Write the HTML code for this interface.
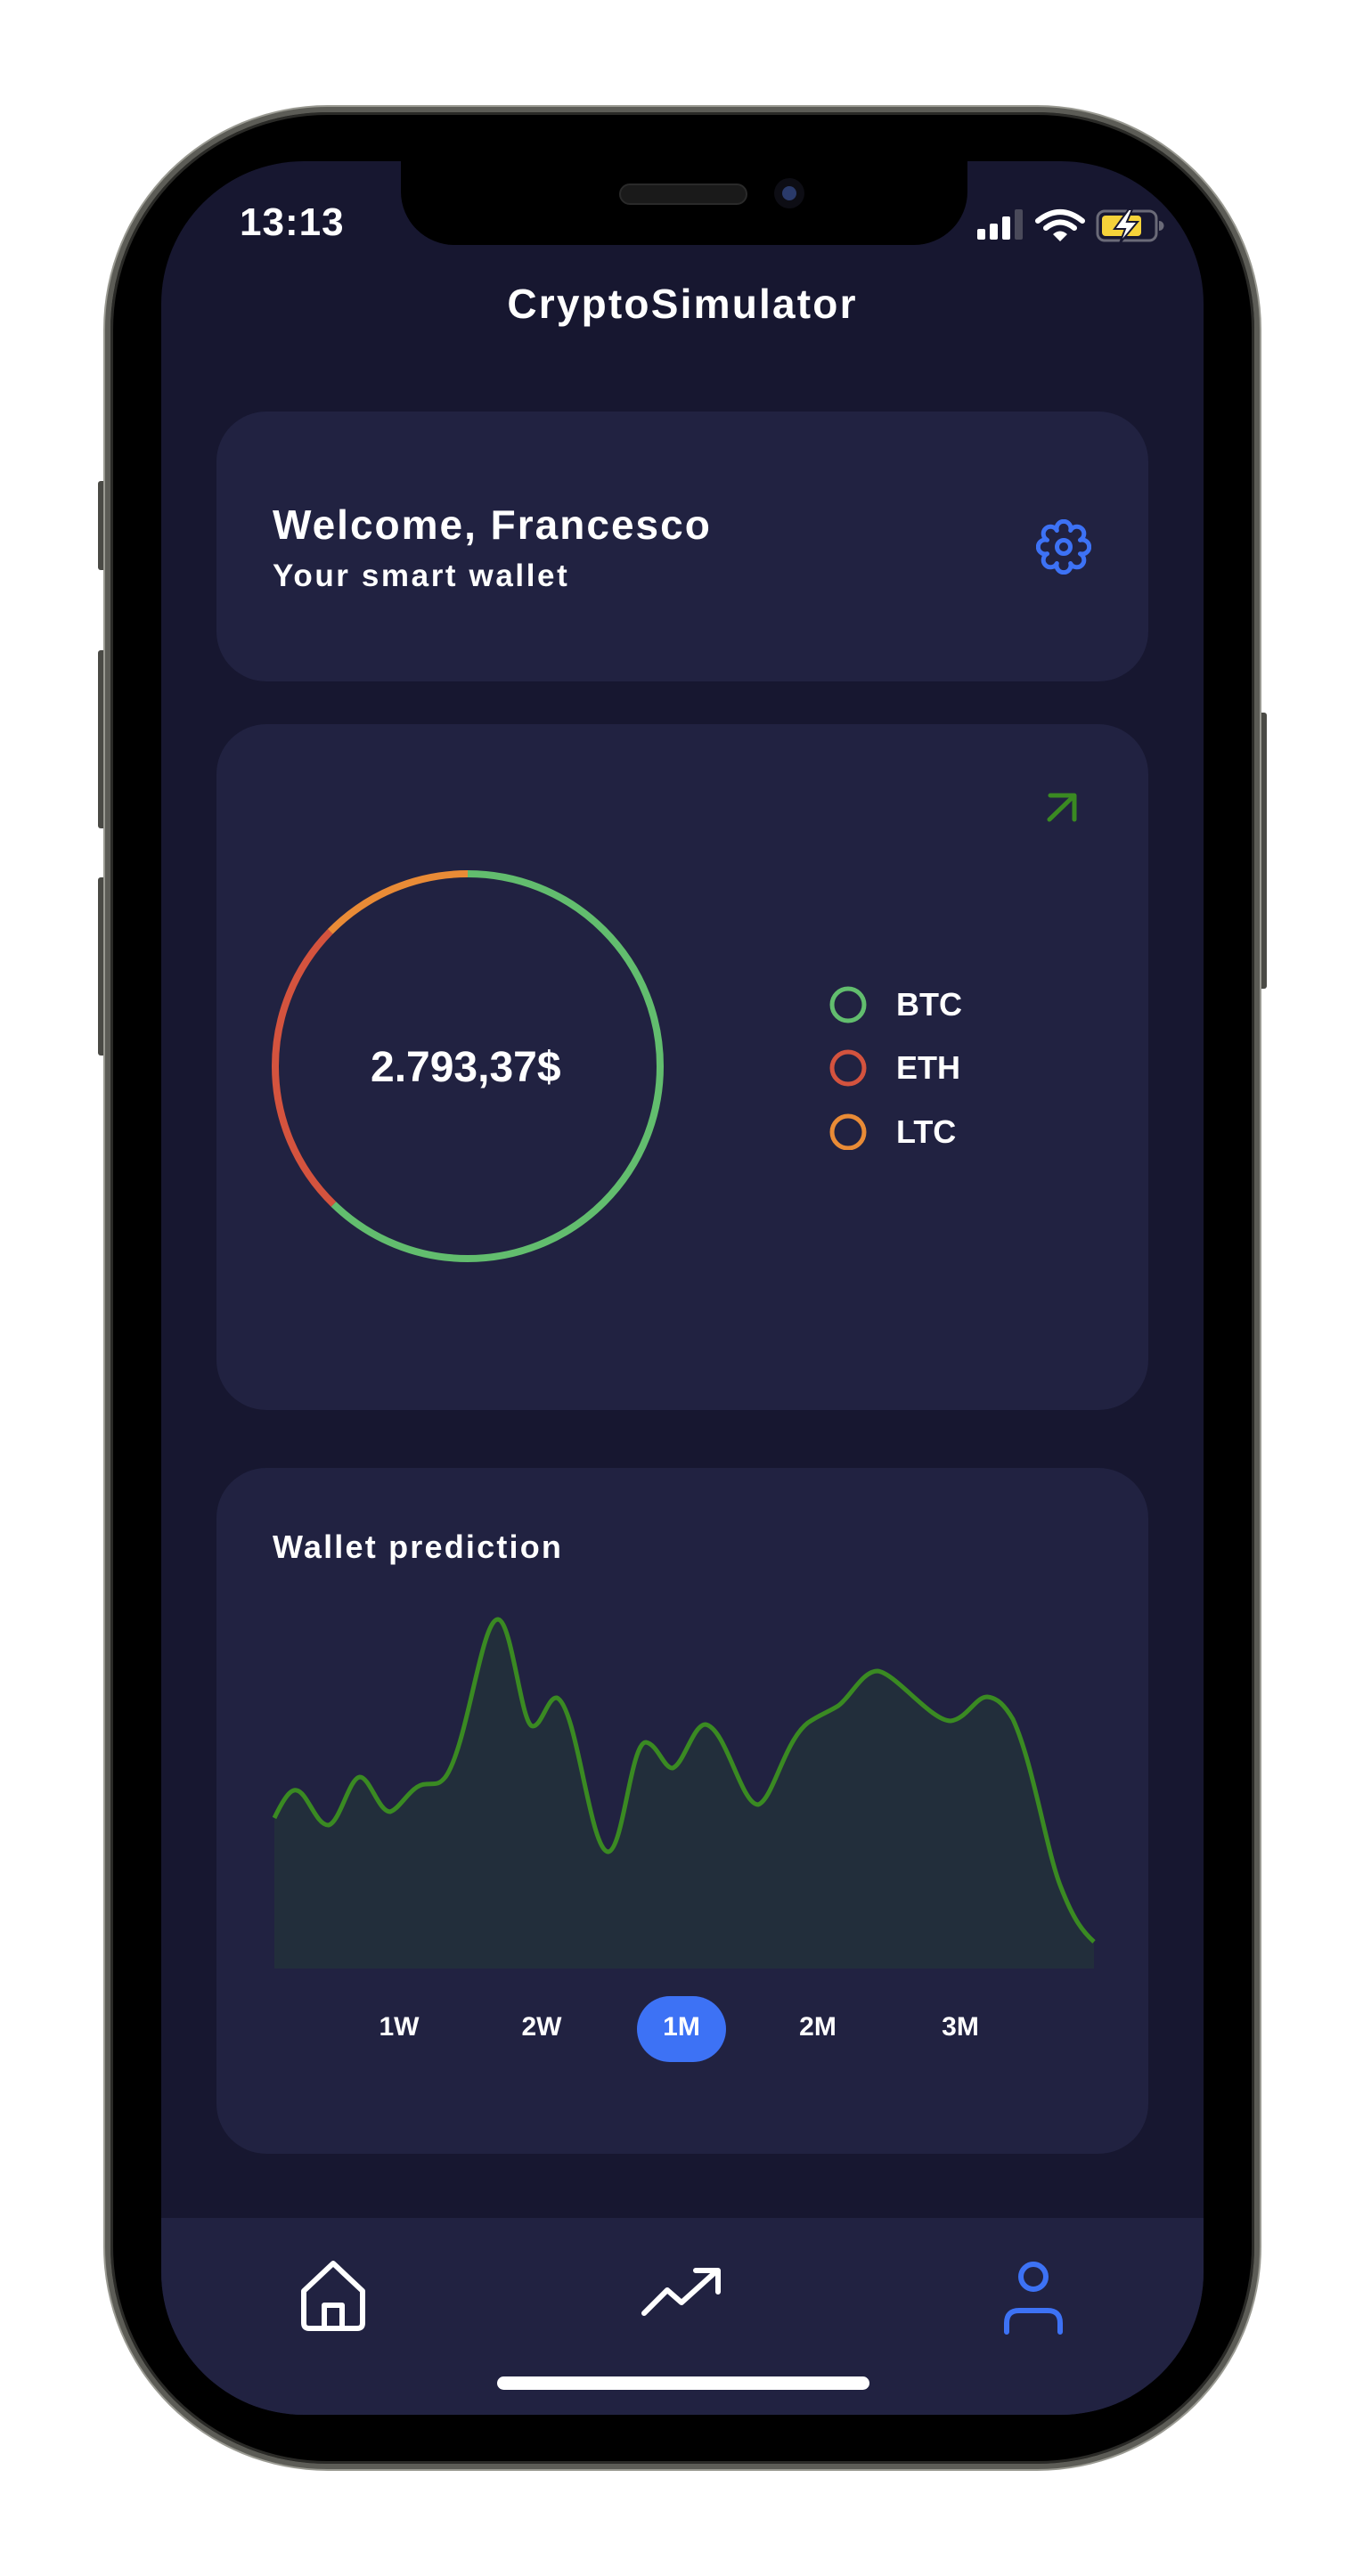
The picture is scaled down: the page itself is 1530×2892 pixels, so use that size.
<!DOCTYPE html>
<html><head><meta charset="utf-8"><style>
*{margin:0;padding:0;box-sizing:border-box}
html,body{width:1530px;height:2892px;background:#fff;overflow:hidden;font-family:"Liberation Sans",sans-serif}
.abs{position:absolute}
.frame{left:118px;top:120px;width:1296px;height:2652px;border-radius:250px;background:#000;border:6px solid #5c5c56;box-shadow:inset 0 0 0 3px #2a2a27,0 0 0 2px #9a9a92}
.screen{left:181px;top:181px;width:1170px;height:2530px;border-radius:160px;background:#171730;overflow:hidden}
.card{background:#212241;border-radius:56px;position:absolute;left:62px;width:1046px}
.t{color:#fff;font-weight:bold;position:absolute;white-space:nowrap}
.btn{position:absolute;top:2078px;color:#fff;font-weight:bold;font-size:30px;transform:translateX(-50%)}
</style></head><body>
<div class="abs" style="left:110px;top:540px;width:12px;height:100px;background:#4a4a45;border-radius:3px"></div>
<div class="abs" style="left:110px;top:730px;width:12px;height:200px;background:#4a4a45;border-radius:3px"></div>
<div class="abs" style="left:110px;top:985px;width:12px;height:200px;background:#4a4a45;border-radius:3px"></div>
<div class="abs" style="left:1410px;top:800px;width:12px;height:310px;background:#4a4a45;border-radius:3px"></div>
<div class="abs frame"></div>
<div class="abs screen">
  <div class="abs" style="left:269px;top:-10px;width:636px;height:104px;background:#000;border-radius:0 0 60px 60px"></div>
  <div class="abs" style="left:514px;top:25px;width:144px;height:24px;background:#1a1a1a;border-radius:12px;border:2px solid #2a2a2a"></div>
  <div class="abs" style="left:688px;top:19px;width:34px;height:34px;background:#0d0d14;border-radius:50%"><div style="margin:9px;width:16px;height:16px;border-radius:50%;background:#2a3a6a"></div></div>
  <div class="t" style="left:88px;top:44px;font-size:44px;letter-spacing:1px">13:13</div>
  <svg class="abs" style="left:910px;top:50px" width="220" height="45" viewBox="0 0 220 45">
    <rect x="6" y="26" width="9" height="12" rx="2" fill="#fff"/><rect x="20" y="20" width="9" height="18" rx="2" fill="#fff"/><rect x="34" y="12" width="9" height="26" rx="2" fill="#fff"/><rect x="48" y="4" width="9" height="34" rx="2" fill="#4a4a5a"/>
    <path d="M74 17 Q99 -3 124 17" stroke="#fff" stroke-width="6" fill="none" stroke-linecap="round"/><path d="M83 25 Q99 12 115 25" stroke="#fff" stroke-width="6" fill="none" stroke-linecap="round"/><path d="M91 32 L99 40 L107 32 Q99 25 91 32Z" fill="#fff"/>
    <rect x="141" y="6" width="66" height="33" rx="8" fill="none" stroke="#6a6a78" stroke-width="3"/><rect x="146" y="11" width="44" height="23" rx="4" fill="#f5d23a"/><path d="M210 17 v11 a4 4 0 0 0 0 -11z" fill="#6a6a78"/>
    <path d="M176 4 L160 26 L172 26 L166 42 L186 18 L174 18 L180 4Z" fill="#fff" stroke="#171730" stroke-width="2"/>
  </svg>
  <div class="t" style="left:0;width:1170px;text-align:center;top:133px;font-size:46px;letter-spacing:2.2px">CryptoSimulator</div>
  <div class="card" style="top:281px;height:303px"></div>
  <div class="t" style="left:125px;top:381px;font-size:46px;letter-spacing:2px">Welcome, Francesco</div>
  <div class="t" style="left:125px;top:446px;font-size:35px;letter-spacing:2.6px">Your smart wallet</div>
  <svg class="abs" style="left:982px;top:402px" width="62" height="62" viewBox="0 0 62 62" fill="none" stroke="#3d72f5" stroke-width="5" stroke-linejoin="round"><path d="M23.3 12.5 A8 8 0 1 1 38.7 12.5 A8 8 0 1 1 49.5 23.3 A8 8 0 1 1 49.5 38.7 A8 8 0 1 1 38.7 49.5 A8 8 0 1 1 23.3 49.5 A8 8 0 1 1 12.5 38.7 A8 8 0 1 1 12.5 23.3 A8 8 0 1 1 23.3 12.5Z"/><circle cx="31" cy="31" r="7.5"/></svg>
  <div class="card" style="top:632px;height:770px"></div>
  <svg class="abs" style="left:990px;top:705px" width="40" height="40" viewBox="0 0 40 40"><path d="M7 34 L35 7 M8 7 H35 V34" stroke="#3a8a22" stroke-width="5" fill="none" stroke-linecap="round" stroke-linejoin="round"/></svg>
  <svg class="abs" style="left:114px;top:786px" width="460" height="460" viewBox="0 0 460 460">
    <g transform="rotate(-90 230 230)" fill="none" stroke-width="8">
      <circle cx="230" cy="230" r="216" stroke="#62bd6e" stroke-dasharray="845 2000"/>
      <circle cx="230" cy="230" r="216" stroke="#d4533e" stroke-dasharray="0 845 340 2000"/>
      <circle cx="230" cy="230" r="216" stroke="#e98b36" stroke-dasharray="0 1185 172 2000"/>
    </g>
  </svg>
  <div class="t" style="left:235px;top:990px;font-size:48px">2.793,37$</div>
  <svg class="abs" style="left:740px;top:920px" width="60" height="190" viewBox="0 0 60 190">
    <circle cx="31" cy="27" r="18" stroke="#62bd6e" stroke-width="5" fill="none"/>
    <circle cx="31" cy="98" r="18" stroke="#d4533e" stroke-width="5" fill="none"/>
    <circle cx="31" cy="170" r="18" stroke="#e98b36" stroke-width="5" fill="none"/>
  </svg>
  <div class="t" style="left:825px;top:926px;font-size:36px">BTC</div>
  <div class="t" style="left:825px;top:997px;font-size:36px">ETH</div>
  <div class="t" style="left:825px;top:1069px;font-size:36px">LTC</div>
  <div class="card" style="top:1467px;height:770px"></div>
  <div class="t" style="left:125px;top:1535px;font-size:36px;letter-spacing:2.2px">Wallet prediction</div>
  <svg class="abs" style="left:0;top:0" width="1170" height="2530" viewBox="181 181 1170 2530">
    <path d="M308 2041 C318 2020 326 2008 333 2010 C345 2012 355 2050 369 2049 C382 2045 392 1996 404 1995 C415 1995 425 2034 438 2034 C450 2030 462 2003 478 2003 C488 2002 492 2005 500 1995 C525 1960 540 1818 559 1818 C575 1820 585 1938 598 1938 C608 1938 615 1905 625 1906 C648 1915 662 2079 683 2079 C700 2075 708 1956 725 1956 C738 1958 745 1985 755 1985 C768 1980 778 1936 792 1936 C815 1940 832 2026 851 2026 C868 2020 880 1955 907 1934 C920 1925 930 1922 941 1915 C955 1905 968 1876 985 1876 C1005 1878 1045 1932 1067 1932 C1085 1930 1095 1905 1108 1905 C1120 1906 1128 1915 1137 1930 C1160 1980 1175 2080 1191 2119 C1205 2155 1215 2168 1228 2180 L1228 2210 L308 2210Z" fill="#222e3b"/>
    <path d="M308 2041 C318 2020 326 2008 333 2010 C345 2012 355 2050 369 2049 C382 2045 392 1996 404 1995 C415 1995 425 2034 438 2034 C450 2030 462 2003 478 2003 C488 2002 492 2005 500 1995 C525 1960 540 1818 559 1818 C575 1820 585 1938 598 1938 C608 1938 615 1905 625 1906 C648 1915 662 2079 683 2079 C700 2075 708 1956 725 1956 C738 1958 745 1985 755 1985 C768 1980 778 1936 792 1936 C815 1940 832 2026 851 2026 C868 2020 880 1955 907 1934 C920 1925 930 1922 941 1915 C955 1905 968 1876 985 1876 C1005 1878 1045 1932 1067 1932 C1085 1930 1095 1905 1108 1905 C1120 1906 1128 1915 1137 1930 C1160 1980 1175 2080 1191 2119 C1205 2155 1215 2168 1228 2180" fill="none" stroke="#3a8a22" stroke-width="5"/>
  </svg>
  <div class="abs" style="left:534px;top:2060px;width:100px;height:74px;border-radius:37px;background:#3d72f5"></div>
  <div class="btn" style="left:267px">1W</div>
  <div class="btn" style="left:427px">2W</div>
  <div class="btn" style="left:584px">1M</div>
  <div class="btn" style="left:737px">2M</div>
  <div class="btn" style="left:897px">3M</div>
  <div class="abs" style="left:0;top:2309px;width:1170px;height:230px;background:#212241"></div>
  <svg class="abs" style="left:155px;top:2355px" width="76" height="82" viewBox="0 0 76 82" fill="none" stroke="#fff" stroke-width="6" stroke-linejoin="round"><path d="M38 5 L71 36 V72 Q71 78 65 78 H11 Q5 78 5 72 V36 Z"/><path d="M28 78 V52 H48 V78"/></svg>
  <svg class="abs" style="left:538px;top:2362px" width="96" height="60" viewBox="0 0 96 60" fill="none" stroke="#fff" stroke-width="6" stroke-linecap="round" stroke-linejoin="round"><path d="M4 54 L30 28 L46 42 L86 6 M62 6 H87 V30"/></svg>
  <svg class="abs" style="left:943px;top:2357px" width="74" height="84" viewBox="0 0 74 84" fill="none" stroke="#3d72f5" stroke-width="6" stroke-linecap="round"><circle cx="36" cy="18" r="14"/><path d="M6 80 V70 Q6 56 20 56 H52 Q66 56 66 70 V80"/></svg>
  <div class="abs" style="left:377px;top:2487px;width:418px;height:15px;border-radius:8px;background:#fff"></div>
</div>
</body></html>
